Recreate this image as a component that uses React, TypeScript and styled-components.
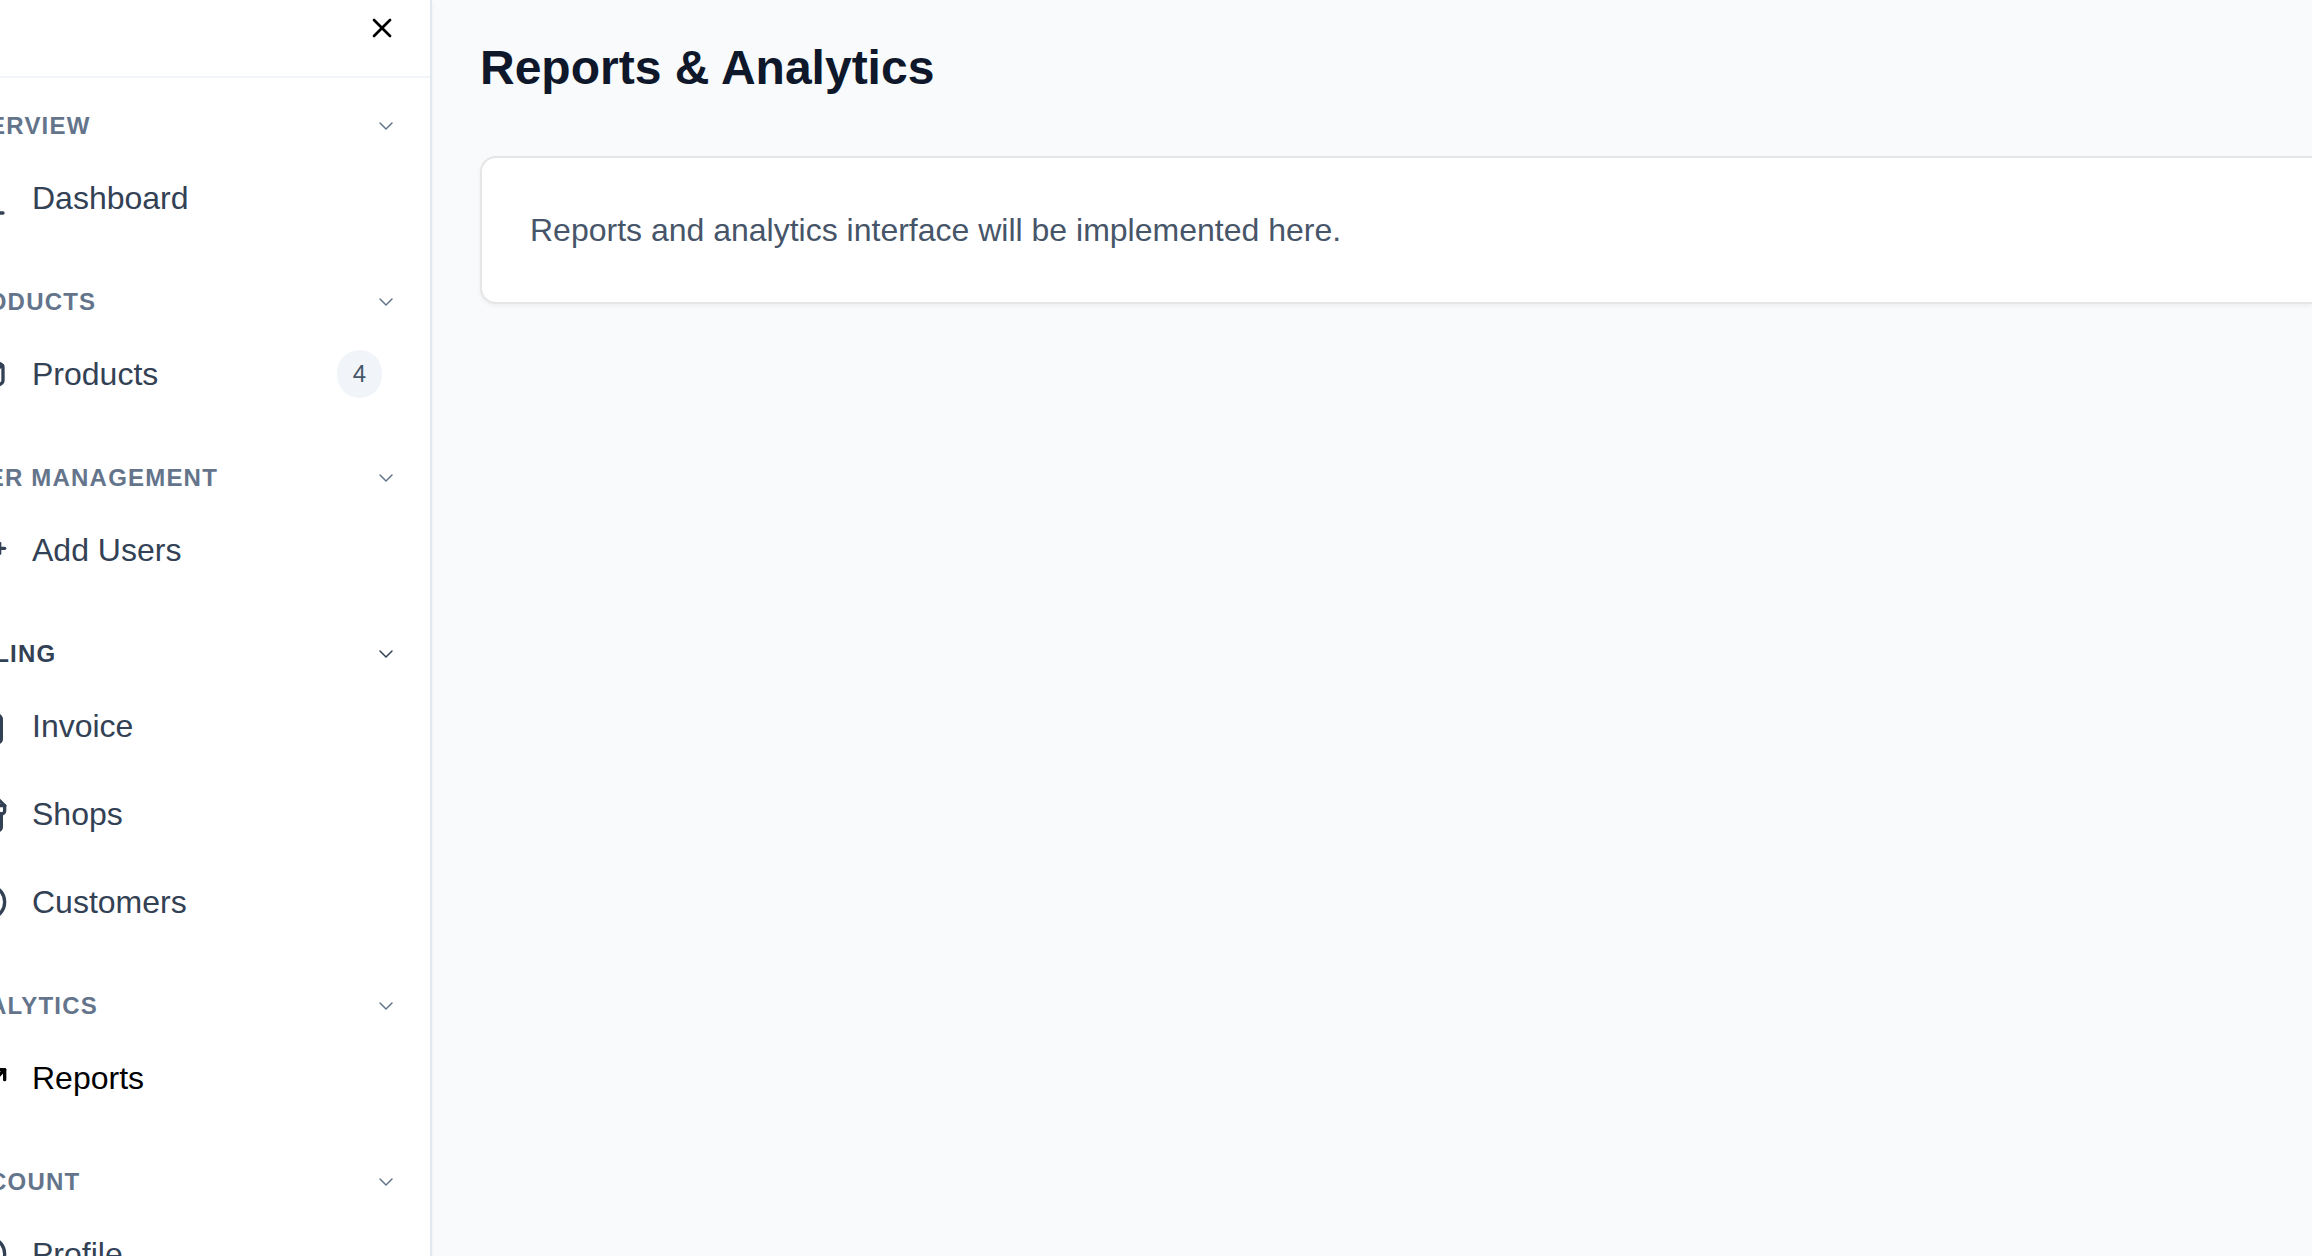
import React from "react";
import styled, { createGlobalStyle, css } from "styled-components";
import {
  ChartColumn,
  ChevronDown,
  CircleUser,
  FileText,
  Package,
  TrendingUp,
  UserPlus,
  X,
} from "lucide-react";

const GlobalStyle = createGlobalStyle`
  *, *::before, *::after { box-sizing: border-box; }
  html, body, #root { height: 100%; }
  body {
    margin: 0;
    overflow: hidden;
    background: #f8fafc;
    font-family: "Liberation Sans", Helvetica, Arial, sans-serif;
  }
  h1, h2, p, ul { margin: 0; padding: 0; }
`;

const Shell = styled.div`
  display: flex;
  height: 100%;
`;

/* The drawer rests partly past the left edge of the window. */
const Sidebar = styled.aside`
  display: flex;
  flex-direction: column;
  flex: none;
  width: 512px;
  margin-left: -80px;
  overflow: hidden;
  background: #ffffff;
  border-right: 2px solid #e2e8f0;
  box-shadow: 0 2px 4px rgba(0, 0, 0, 0.05);
`;

const SidebarHeader = styled.header`
  display: flex;
  justify-content: flex-end;
  padding: 12px 32px 32px;
  border-bottom: 2px solid #f1f5f9;
`;

const plainButton = css`
  border: 0;
  padding: 0;
  background: none;
  font: inherit;
  cursor: pointer;
`;

const CloseButton = styled.button`
  ${plainButton}
  display: flex;
  color: #000000;
`;

const Nav = styled.nav`
  display: flex;
  flex-direction: column;
  gap: 48px;
  padding: 32px;
`;

const Section = styled.section`
  display: flex;
  flex-direction: column;
  gap: 16px;
`;

const SectionToggle = styled.button<{ $strong?: boolean }>`
  ${plainButton}
  display: flex;
  align-items: center;
  justify-content: space-between;
  width: 100%;
  color: ${(p) => (p.$strong ? "#334155" : "#64748b")};
  font-size: 24px;
  font-weight: 700;
  line-height: 32px;
  letter-spacing: 0.05em;
  text-transform: uppercase;
`;

const ItemList = styled.ul`
  display: flex;
  flex-direction: column;
  gap: 8px;
  list-style: none;
`;

const ItemLink = styled.a<{ $active?: boolean }>`
  display: flex;
  align-items: center;
  gap: 24px;
  padding: 16px;
  color: ${(p) => (p.$active ? "#000000" : "#334155")};
  font-size: 32px;
  line-height: 48px;
  text-decoration: none;
`;

const ItemLabel = styled.span`
  flex: 1;
`;

const Badge = styled.span`
  padding: 8px 16px;
  border-radius: 24px;
  background: #f1f5f9;
  color: #475569;
  font-size: 24px;
  line-height: 32px;
`;

const Main = styled.main`
  display: flex;
  flex-direction: column;
  flex: 1;
  gap: 56px;
  min-width: 0;
  padding: 36px 0 48px 48px;
`;

const Title = styled.h1`
  color: #0f172a;
  font-size: 48px;
  font-weight: 700;
  line-height: 64px;
`;

const Card = styled.section`
  padding: 48px;
  border: 2px solid #e5e5e5;
  border-right: 0;
  border-radius: 16px 0 0 16px;
  background: #ffffff;
  box-shadow: 0 2px 4px rgba(0, 0, 0, 0.05);
`;

const CardText = styled.p`
  color: #475569;
  font-size: 32px;
  line-height: 48px;
`;

type IconProps = { size?: number };

function Storefront({ size = 24 }: IconProps) {
  return (
    <svg
      width={size}
      height={size}
      viewBox="0 0 24 24"
      fill="none"
      stroke="currentColor"
      strokeWidth={2}
      strokeLinecap="round"
      strokeLinejoin="round"
      aria-hidden="true"
    >
      <path d="m2 7 4.41-4.41A2 2 0 0 1 7.83 2h8.34a2 2 0 0 1 1.42.59L22 7" />
      <path d="M4 12v8a2 2 0 0 0 2 2h12a2 2 0 0 0 2-2v-8" />
      <path d="M15 22v-4a2 2 0 0 0-2-2h-2a2 2 0 0 0-2 2v4" />
      <path d="M2 7h20" />
      <path d="M22 7v3a2 2 0 0 1-2 2a2.7 2.7 0 0 1-1.59-.63.7.7 0 0 0-.82 0A2.7 2.7 0 0 1 16 12a2.7 2.7 0 0 1-1.59-.63.7.7 0 0 0-.82 0A2.7 2.7 0 0 1 12 12a2.7 2.7 0 0 1-1.59-.63.7.7 0 0 0-.82 0A2.7 2.7 0 0 1 8 12a2.7 2.7 0 0 1-1.59-.63.7.7 0 0 0-.82 0A2.7 2.7 0 0 1 4 12a2 2 0 0 1-2-2V7" />
    </svg>
  );
}

type Item = {
  label: string;
  icon: React.ComponentType<IconProps>;
  badge?: number;
  active?: boolean;
};
type Group = { title: string; strong?: boolean; items: Item[] };

const groups: Group[] = [
  { title: "Overview", items: [{ label: "Dashboard", icon: ChartColumn }] },
  { title: "Products", items: [{ label: "Products", icon: Package, badge: 4 }] },
  { title: "User Management", items: [{ label: "Add Users", icon: UserPlus }] },
  {
    title: "Billing",
    strong: true,
    items: [
      { label: "Invoice", icon: FileText },
      { label: "Shops", icon: Storefront },
      { label: "Customers", icon: CircleUser },
    ],
  },
  { title: "Analytics", items: [{ label: "Reports", icon: TrendingUp, active: true }] },
  { title: "Account", items: [{ label: "Profile", icon: CircleUser }] },
];

export default function App() {
  return (
    <>
      <GlobalStyle />
      <Shell>
        <Sidebar>
          <SidebarHeader>
            <CloseButton type="button" aria-label="Close sidebar">
              <X size={32} />
            </CloseButton>
          </SidebarHeader>
          <Nav>
            {groups.map((group) => (
              <Section key={group.title}>
                <SectionToggle type="button" aria-expanded $strong={group.strong}>
                  {group.title}
                  <ChevronDown size={24} strokeWidth={1.5} />
                </SectionToggle>
                <ItemList>
                  {group.items.map(({ label, icon: Icon, badge, active }) => (
                    <li key={label}>
                      <ItemLink href="#" $active={active} aria-current={active ? "page" : undefined}>
                        <Icon size={40} />
                        <ItemLabel>{label}</ItemLabel>
                        {badge !== undefined && <Badge>{badge}</Badge>}
                      </ItemLink>
                    </li>
                  ))}
                </ItemList>
              </Section>
            ))}
          </Nav>
        </Sidebar>
        <Main>
          <Title>Reports &amp; Analytics</Title>
          <Card>
            <CardText>Reports and analytics interface will be implemented here.</CardText>
          </Card>
        </Main>
      </Shell>
    </>
  );
}
